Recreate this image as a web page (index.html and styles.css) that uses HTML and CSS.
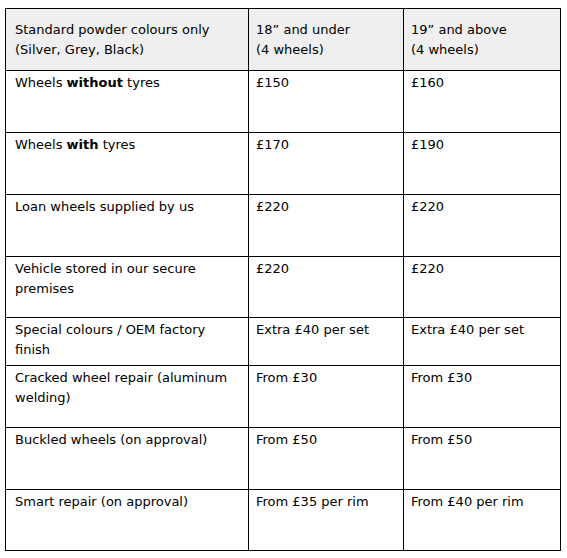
FILE: index.html
```html
<!DOCTYPE html>
<html>
<head>
<meta charset="utf-8">
<link rel="stylesheet" href="styles.css">
</head>
<body>
<table class="prices">
  <colgroup>
    <col class="c1"><col class="c2"><col class="c3">
  </colgroup>
  <tr class="head">
    <td>Standard powder colours only<br>(Silver, Grey, Black)</td>
    <td>18” and under<br>(4 wheels)</td>
    <td>19” and above<br>(4 wheels)</td>
  </tr>
  <tr class="tall">
    <td>Wheels <b>without</b> tyres</td>
    <td>£150</td>
    <td>£160</td>
  </tr>
  <tr class="tall">
    <td>Wheels <b>with</b> tyres</td>
    <td>£170</td>
    <td>£190</td>
  </tr>
  <tr class="tall">
    <td>Loan wheels supplied by us</td>
    <td>£220</td>
    <td>£220</td>
  </tr>
  <tr class="tall-s">
    <td>Vehicle stored in our secure premises</td>
    <td>£220</td>
    <td>£220</td>
  </tr>
  <tr class="short">
    <td>Special colours / OEM factory finish</td>
    <td>Extra £40 per set</td>
    <td>Extra £40 per set</td>
  </tr>
  <tr class="tall">
    <td>Cracked wheel repair (aluminum welding)</td>
    <td>From £30</td>
    <td>From £30</td>
  </tr>
  <tr class="tall">
    <td>Buckled wheels (on approval)</td>
    <td>From £50</td>
    <td>From £50</td>
  </tr>
  <tr class="tall-s">
    <td>Smart repair (on approval)</td>
    <td>From £35 per rim</td>
    <td>From £40 per rim</td>
  </tr>
</table>
</body>
</html>
```
FILE: styles.css
```css
html, body {
  margin: 0;
  padding: 0;
  background: #ffffff;
}
body {
  padding: 8px 0 0 5px;
  font-family: "Comic Sans MS", "DejaVu Sans", sans-serif;
  font-size: 13px;
  line-height: 20px;
  color: #000000;
}
.prices {
  border-collapse: collapse;
  table-layout: fixed;
  width: 555px;
}
.c1 { width: 243px; }
.c2 { width: 155px; }
.c3 { width: 157px; }
.prices td {
  border: 1px solid #000000;
  vertical-align: top;
  padding: 2px 6px 2px 7px;
}
.prices td:first-child {
  padding-left: 9px;
}
.prices b {
  font-weight: bold;
}
.head td {
  background: #efefef;
  vertical-align: middle;
}
.head { height: 62px; }
.tall { height: 62px; }
.tall-s { height: 61px; }
.short { height: 48px; }
```
